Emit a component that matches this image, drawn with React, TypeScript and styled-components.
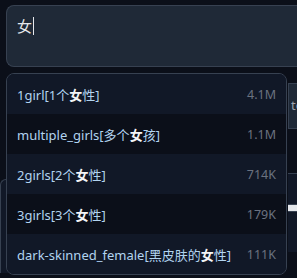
import * as React from 'react'
import styled, { createGlobalStyle } from 'styled-components'

const Global = createGlobalStyle`
	html, body {
		margin: 0;
		padding: 0;
		background: #0b0f19;
	}
	body {
		font-family: 'Noto Sans', 'Noto Sans CJK SC', sans-serif;
		overflow: hidden;
	}
`

const Page = styled.div`
	position: relative;
	width: 297px;
	height: 278px;
	padding: 5px 0 0 6px;
	box-sizing: border-box;
	background: #0b0f19;
	overflow: hidden;
`

const Prompt = styled.div`
	height: 62px;
	box-sizing: border-box;
	border: 1px solid #374151;
	border-right: none;
	border-radius: 8px 0 0 8px;
	background: #1f2937;
	padding: 10px 10px;
	color: #e5e7eb;
	font-size: 15px;
	line-height: 20px;
	font-family: 'Noto Sans CJK SC', sans-serif;
	display: flex;
	align-items: flex-start;
`

const Caret = styled.span`
	display: inline-block;
	width: 1px;
	height: 18px;
	margin-left: 1px;
	margin-top: 1px;
	background: #e5e7eb;
`

const Behind = styled.div`
	display: grid;
	grid-template-columns: 1fr 9px;
	margin-top: 16px;
	margin-left: -6px;
	height: 190px;
`

const LeftPanel = styled.div`
	margin-top: 96px;
	margin-right: 20px;
	border-top: 1px solid #374151;
	border-left: 1px solid #374151;
	border-radius: 6px 0 0 0;
	background: #111827;
`

const RightPanel = styled.div`
	display: flex;
	flex-direction: column;
	overflow: hidden;
`

const SideBox = styled.div`
	height: 46px;
	border: 1px solid #374151;
	border-right: none;
	background: #1f2937;
	color: #9ca3af;
	font-size: 13px;
	padding: 12px 0 0 2px;
	box-sizing: border-box;
	white-space: nowrap;
`

const SideGap = styled.div<{ h: number }>`
	height: ${p => p.h}px;
`

const SideBar = styled.div<{ h: number; c: string }>`
	height: ${p => p.h}px;
	background: ${p => p.c};
	border-top: 1px solid #374151;
`

const Dropdown = styled.ul`
	position: absolute;
	top: 73px;
	left: 6px;
	width: 281px;
	margin: 0;
	padding: 0;
	list-style: none;
	border: 1px solid #374151;
	border-radius: 8px;
	overflow: hidden;
	background: #111827;
	box-sizing: border-box;
`

const Item = styled.li<{ alt: boolean }>`
	height: 40px;
	display: flex;
	align-items: center;
	justify-content: space-between;
	padding: 0 10px;
	background: ${p => (p.alt ? '#0b0f19' : '#111827')};
	font-size: 13px;
	color: #b2d4f0;
`

const Tag = styled.span`
	white-space: nowrap;
`

const Hit = styled.b`
	color: #f3f4f6;
	font-weight: 700;
`

const Count = styled.span`
	color: #6b7280;
	font-size: 12.5px;
`

const items = [
	{ pre: '1girl[1个', post: '性]', count: '4.1M' },
	{ pre: 'multiple_girls[多个', post: '孩]', count: '1.1M' },
	{ pre: '2girls[2个', post: '性]', count: '714K' },
	{ pre: '3girls[3个', post: '性]', count: '179K' },
	{ pre: 'dark-skinned_female[黑皮肤的', post: '性]', count: '111K' },
]

const App: React.FC = () => (
	<Page>
		<Global />
		<Prompt>
			女<Caret />
		</Prompt>
		<Behind>
			<LeftPanel />
			<RightPanel>
				<SideBox>to</SideBox>
				<SideGap h={44} />
				<SideBar h={30} c="#111827" />
				<SideBar h={6} c="#e5e7eb" />
				<SideBar h={40} c="#111827" />
			</RightPanel>
		</Behind>
		<Dropdown>
			{items.map((it, i) => (
				<Item key={i} alt={i % 2 === 1}>
					<Tag>
						{it.pre}
						<Hit>女</Hit>
						{it.post}
					</Tag>
					<Count>{it.count}</Count>
				</Item>
			))}
		</Dropdown>
	</Page>
)

export default App
